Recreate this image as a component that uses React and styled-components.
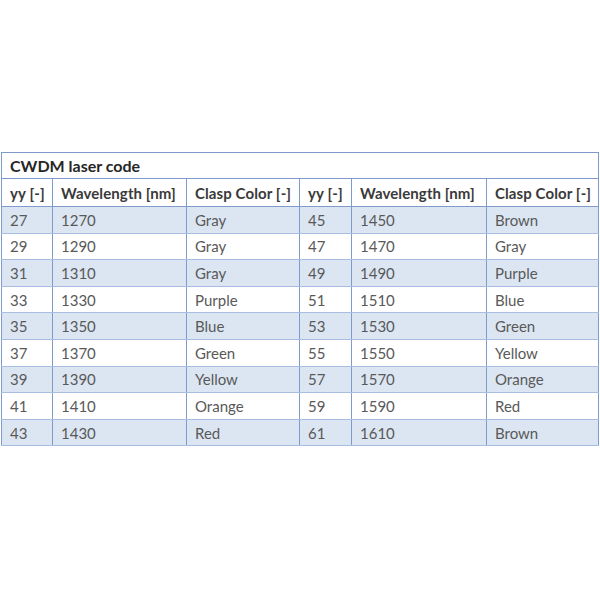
import React from 'react';
import styled, { createGlobalStyle } from 'styled-components';

const GlobalStyle = createGlobalStyle`
    html, body {
        margin: 0;
        padding: 0;
        background: #ffffff;
    }
`;

const Page = styled.div`
    width: 600px;
    height: 600px;
    display: flex;
    flex-direction: column;
    justify-content: flex-start;
    padding: 152px 2px 0 1px;
    box-sizing: border-box;
    font-family: Lato, 'Liberation Sans', sans-serif;
`;

const Table = styled.table`
    width: 597px;
    border-collapse: collapse;
    table-layout: fixed;
    border: 1px solid #7f9bcc;
`;

const Col = styled.col`
    width: ${props => props.$w}px;
`;

const TitleCell = styled.th`
    height: 25px;
    padding: 0 8px;
    text-align: left;
    font-size: 16px;
    font-weight: 700;
    color: #262626;
    border: 1px solid #7f9bcc;
`;

const HeadCell = styled.th`
    height: 27px;
    padding: 0 8px;
    text-align: left;
    font-size: 15px;
    font-weight: 700;
    color: #3a3a3a;
    border: 1px solid #7f9bcc;
    white-space: nowrap;
    letter-spacing: 0.1px;
`;

const Row = styled.tr`
    background: ${props => (props.$shade ? '#dce6f2' : '#ffffff')};
`;

const Cell = styled.td`
    height: 25.6px;
    padding: 0 8px;
    font-size: 15px;
    color: #595959;
    border-left: 1px solid #7f9bcc;
    border-right: 1px solid #7f9bcc;
    border-bottom: 1px solid #a9bde0;
    white-space: nowrap;
`;

const rows = [
    [27, 1270, 'Gray', 45, 1450, 'Brown'],
    [29, 1290, 'Gray', 47, 1470, 'Gray'],
    [31, 1310, 'Gray', 49, 1490, 'Purple'],
    [33, 1330, 'Purple', 51, 1510, 'Blue'],
    [35, 1350, 'Blue', 53, 1530, 'Green'],
    [37, 1370, 'Green', 55, 1550, 'Yellow'],
    [39, 1390, 'Yellow', 57, 1570, 'Orange'],
    [41, 1410, 'Orange', 59, 1590, 'Red'],
    [43, 1430, 'Red', 61, 1610, 'Brown'],
];

const headers = ['yy [-]', 'Wavelength [nm]', 'Clasp Color [-]'];
const widths = [51, 134, 113, 52, 135, 112];

export default function App() {
    return (
        <>
            <GlobalStyle />
            <Page>
                <Table>
                    <colgroup>
                        {widths.map((w, i) => (
                            <Col key={i} $w={w} />
                        ))}
                    </colgroup>
                    <thead>
                        <tr>
                            <TitleCell colSpan={6}>CWDM laser code</TitleCell>
                        </tr>
                        <tr>
                            {[...headers, ...headers].map((h, i) => (
                                <HeadCell key={i}>{h}</HeadCell>
                            ))}
                        </tr>
                    </thead>
                    <tbody>
                        {rows.map((r, i) => (
                            <Row key={r[0]} $shade={i % 2 === 0}>
                                {r.map((v, j) => (
                                    <Cell key={j}>{v}</Cell>
                                ))}
                            </Row>
                        ))}
                    </tbody>
                </Table>
            </Page>
        </>
    );
}
